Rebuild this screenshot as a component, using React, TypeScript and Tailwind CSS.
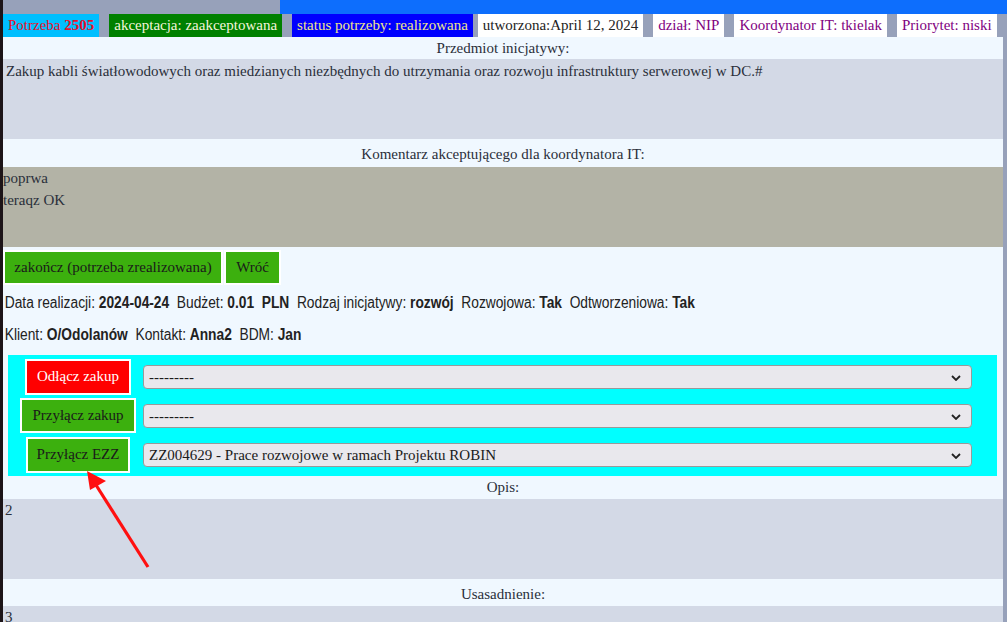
import React from "react";

const serif = "font-['Liberation_Serif',serif]";

const tabs = [
  { label: "akceptacja: zaakceptowana", cls: "bg-[#008000] text-[#f5f5dc] ml-[10px]" },
  { label: "status potrzeby: realizowana", cls: "bg-[#0000ff] text-[#f0e68c] ml-[10px]" },
  { label: "utworzona:April 12, 2024", cls: "bg-white text-[#222] ml-[5px]" },
  { label: "dział: NIP", cls: "bg-white text-[#800080] ml-[10px]" },
  { label: "Koordynator IT: tkielak", cls: "bg-white text-[#800080] ml-[10px]" },
  { label: "Priorytet: niski", cls: "bg-white text-[#800080] ml-[10px]" },
];

const selects = [
  { btn: "Odłącz zakup", btnCls: "bg-[#ff0000] text-white w-[106px] h-[36px]", value: "---------" },
  { btn: "Przyłącz zakup", btnCls: "bg-[#3cb00e] text-[#1a1a1a] w-[116px] h-[35px]", value: "---------" },
  {
    btn: "Przyłącz EZZ",
    btnCls: "bg-[#3cb00e] text-[#1a1a1a] w-[104px] h-[36px]",
    value: "ZZ004629 - Prace rozwojowe w ramach Projektu ROBIN",
  },
];

function Chevron() {
  return (
    <svg width="10" height="6" viewBox="0 0 10 6" className="absolute right-[10px] top-[9px]">
      <path d="M1 1l4 4 4-4" fill="none" stroke="#222" strokeWidth="1.8" />
    </svg>
  );
}

export default function App() {
  return (
    <div className={`relative flex min-h-[622px] w-[1007px] overflow-hidden ${serif} text-[15px] text-[#222]`}>
      <div className="w-[3px] shrink-0 bg-[#1c1418]" />
      <div className="flex flex-1 flex-col bg-[#97a1ba]">
        {/* top strip */}
        <div className="flex h-[14px]">
          <div className="w-[277px] bg-[#97a1ba]" />
          <div className="flex-1 bg-[#0d6efd]" />
        </div>

        {/* tabs */}
        <div className="flex h-[23px] items-stretch">
          <div className="flex items-center bg-[#00bfff] px-[5px] text-[#e8102a]">
            Potrzeba&nbsp;<b>2505</b>
          </div>
          {tabs.map((t) => (
            <div key={t.label} className={`flex items-center px-[5px] ${t.cls}`}>
              {t.label}
            </div>
          ))}
        </div>

        <div className="w-[1000px] bg-[#f0f8ff] text-[#2a2f3a]">
          {/* Przedmiot */}
          <div className="flex h-[22px] items-center justify-center">Przedmiot inicjatywy:</div>
          <div className="h-[80px] bg-[#d3d9e6] pl-[3px] leading-[24px]">
            Zakup kabli światłowodowych oraz miedzianych niezbędnych do utrzymania oraz rozwoju infrastruktury serwerowej w DC.#
          </div>

          {/* Komentarz */}
          <div className="flex h-[28px] items-end justify-center pb-[2px]">
            Komentarz akceptującego dla koordynatora IT:
          </div>
          <div className="h-[80px] bg-[#b3b3a6] leading-[22px]">
            <div>poprwa</div>
            <div>teraqz OK</div>
          </div>

          {/* buttons */}
          <div className="flex gap-[1px] pt-[3px]">
            <button className="h-[35px] w-[220px] border-2 border-white bg-[#3cb00e] text-[#1a1a1a]">
              zakończ (potrzeba zrealizowana)
            </button>
            <button className="h-[35px] w-[57px] border-2 border-white bg-[#3cb00e] text-[#1a1a1a]">
              Wróć
            </button>
          </div>

          {/* info */}
          <div className="font-['Liberation_Sans',sans-serif] text-[16px] leading-[22px] text-[#222]">
            <div className="mt-[7px] origin-left scale-x-[0.86] whitespace-nowrap pl-[2px]">
              Data realizacji: <b>2024-04-24</b>&nbsp; Budżet: <b>0.01 &nbsp;PLN</b>&nbsp; Rodzaj inicjatywy: <b>rozwój</b>&nbsp; Rozwojowa: <b>Tak</b>&nbsp; Odtworzeniowa: <b>Tak</b>
            </div>
            <div className="mt-[10px] origin-left scale-x-[0.86] whitespace-nowrap pl-[2px]">
              Klient: <b>O/Odolanów</b>&nbsp; Kontakt: <b>Anna2</b>&nbsp; BDM: <b>Jan</b>
            </div>
          </div>

          {/* cyan box */}
          <div className="ml-[5px] mt-[9px] w-[989px] bg-[#00ffff] py-[2px] pl-[5px]">
            {selects.map((s) => (
              <div key={s.btn} className="flex h-[39px] items-center">
                <div className="flex w-[130px] justify-center">
                  <button className={`border-2 border-white ${s.btnCls}`}>{s.btn}</button>
                </div>
                <div className="relative h-[24px] w-[829px] rounded-[4px] border border-[#999] bg-[#e9e8ed] pl-[5px] text-[15px] leading-[22px] text-[#1a1a1a]">
                  {s.value}
                  <Chevron />
                </div>
              </div>
            ))}
          </div>

          {/* Opis */}
          <div className="flex h-[23px] items-center justify-center">Opis:</div>
          <div className="h-[80px] bg-[#d3d9e6] pl-[2px] leading-[22px]">2</div>

          <div className="flex h-[27px] items-end justify-center pb-[1px]">Usasadnienie:</div>
          <div className="h-[80px] bg-[#d3d9e6] pl-[2px] leading-[22px]">3</div>
        </div>
      </div>

      {/* arrow annotation */}
      <svg className="pointer-events-none absolute left-0 top-0" width="1007" height="622">
        <line x1="148" y1="567" x2="96" y2="485" stroke="#ff1010" strokeWidth="3.2" />
        <polygon points="87,471 106,481 90,490" fill="#ff1010" />
      </svg>
    </div>
  );
}
